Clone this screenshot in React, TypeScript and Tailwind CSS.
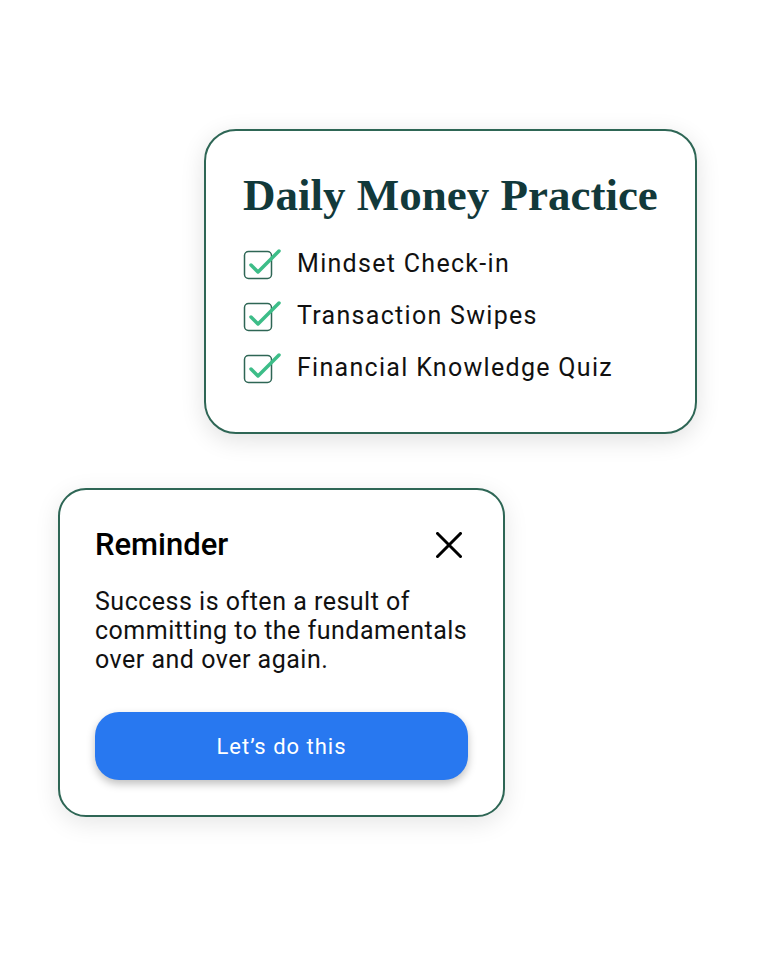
const tasks = ["Mindset Check-in", "Transaction Swipes", "Financial Knowledge Quiz"];

function CheckBox() {
  return (
    <svg width="38" height="32" viewBox="0 0 38 32" className="shrink-0">
      <rect x="1.5" y="3.5" width="27" height="27" rx="4" fill="none" stroke="#2e6655" strokeWidth="1.5" />
      <path d="M8 17 L15 24 L36 3" fill="none" stroke="#3dbd88" strokeWidth="3.5" strokeLinecap="round" strokeLinejoin="round" />
    </svg>
  );
}

function CloseIcon() {
  return (
    <svg width="26" height="26" viewBox="0 0 26 26" className="shrink-0 mr-[6px]">
      <path d="M1.5 1.5 L24.5 24.5 M24.5 1.5 L1.5 24.5" stroke="#000" strokeWidth="3" strokeLinecap="square" />
    </svg>
  );
}

export default function App() {
  return (
    <div className="w-[772px] h-[974px] bg-white relative font-['Roboto',sans-serif]">
      <div className="flex flex-col pt-[129px]">
        {/* Practice card */}
        <div className="ml-[204px] w-[493px] h-[305px] rounded-[32px] border-2 border-[#2e6655] bg-white shadow-[0_6px_24px_rgba(0,0,0,0.12)] pl-[37px] pt-[36px]">
          <h1 className="font-['Liberation_Serif',serif] font-bold text-[45px] leading-[56px] text-[#12393a]">
            Daily Money Practice
          </h1>
          <ul className="mt-[26px] flex flex-col gap-[22px]">
            {tasks.map((t) => (
              <li key={t} className="flex items-center gap-[16px] h-[30px]">
                <CheckBox />
                <span className="text-[25px] text-[#111] tracking-[1.3px]">{t}</span>
              </li>
            ))}
          </ul>
        </div>

        {/* Reminder card */}
        <div className="ml-[58px] mt-[54px] w-[447px] h-[329px] rounded-[28px] border-2 border-[#2e6655] bg-white shadow-[0_6px_24px_rgba(0,0,0,0.10)] px-[35px] pt-[35px]">
          <div className="flex items-center justify-between">
            <h2 className="text-[31px] font-medium text-black leading-[40px]">Reminder</h2>
            <CloseIcon />
          </div>
          <p className="mt-[22px] text-[25px] leading-[29px] text-[#111] tracking-[0.5px]">
            Success is often a result of committing to the fundamentals over and over again.
          </p>
          <button className="mt-[38px] w-full h-[68px] rounded-[24px] bg-[#2878f0] text-white text-[22px] font-normal tracking-[1px] shadow-[0_4px_8px_rgba(0,0,0,0.25)]">
            Let’s do this
          </button>
        </div>
      </div>
    </div>
  );
}
